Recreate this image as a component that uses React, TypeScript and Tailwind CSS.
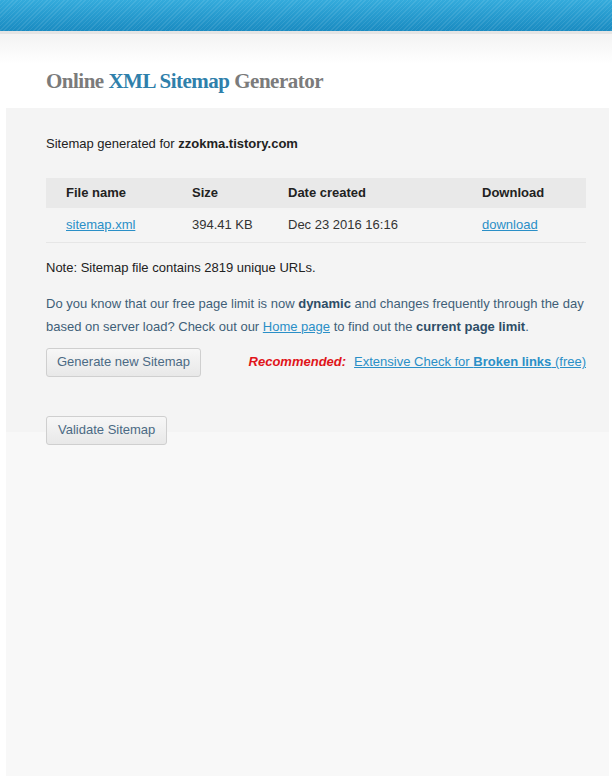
export default function App() {
  return (
    <div className="h-[781px] w-[612px] bg-white font-['Liberation_Sans',Arial,sans-serif] text-[13px]">
      {/* top stripe bar */}
      <div className="h-[31px] bg-[repeating-linear-gradient(135deg,rgba(255,255,255,0.09)_0px,rgba(255,255,255,0.09)_1px,transparent_1px,transparent_3px),linear-gradient(to_bottom,#34abdc,#1a8bc1)]" />
      <div className="h-[3px] bg-[#e4e4e4]" />
      <div className="h-[74px] bg-[linear-gradient(to_bottom,#f3f3f3,#ffffff_40%)] px-[46px] pt-[37px]">
        <h1 className="font-['Liberation_Serif',Georgia,serif] text-[21px] font-bold leading-none tracking-[-0.5px] text-[#7b7b7b]">
          Online <span className="text-[#2f80ab]">XML Sitemap</span> Generator
        </h1>
      </div>

      <div className="ml-[6px] mr-[3px] h-[668px] bg-[linear-gradient(to_bottom,#f4f4f4_324px,#f8f8f8_324px)] pl-[40px] pr-[23px] pt-[26px]">
        <p className="text-[#222]">
          Sitemap generated for <b>zzokma.tistory.com</b>
        </p>

        <table className="mt-[24px] w-full border-collapse text-left">
          <thead>
            <tr className="h-[30px] bg-[#e9e9e9] text-[#222]">
              <th className="w-[146px] pl-[20px] font-bold">File name</th>
              <th className="w-[96px] font-bold">Size</th>
              <th className="w-[194px] font-bold">Date created</th>
              <th className="font-bold">Download</th>
            </tr>
          </thead>
          <tbody>
            <tr className="h-[35px] border-b border-[#e6e6e6] text-[#333]">
              <td className="pl-[20px]">
                <a href="#" className="text-[#2a8fc7] underline">sitemap.xml</a>
              </td>
              <td>394.41 KB</td>
              <td>Dec 23 2016 16:16</td>
              <td>
                <a href="#" className="text-[#2a8fc7] underline">download</a>
              </td>
            </tr>
          </tbody>
        </table>

        <p className="mt-[15px] text-[#222]">Note: Sitemap file contains 2819 unique URLs.</p>

        <p className="mt-[14px] leading-[23px] text-[#3f5f78]">
          Do you know that our free page limit is now <b className="text-[#2e4d66]">dynamic</b> and changes frequently through the day based on server load? Check out our{' '}
          <a href="#" className="text-[#2a8fc7] underline">Home page</a> to find out the{' '}
          <b className="text-[#2e4d66]">current page limit</b>.
        </p>

        <div className="mt-[10px] flex items-center">
          <button className="h-[29px] rounded-[3px] border border-[#cfcfcf] bg-[linear-gradient(to_bottom,#f7f7f7,#e8e8e8)] px-[10px] text-[#4b6a84]">
            Generate new Sitemap
          </button>
          <span className="ml-auto font-bold italic text-[#e0141a]">Recommended:</span>
          <a href="#" className="ml-[8px] text-[#2a8fc7] underline">
            Extensive Check for <b>Broken links</b> (free)
          </a>
        </div>

        <button className="mt-[39px] h-[29px] rounded-[3px] border border-[#cfcfcf] bg-[linear-gradient(to_bottom,#f7f7f7,#e8e8e8)] px-[11px] text-[#4b6a84]">
          Validate Sitemap
        </button>
      </div>
    </div>
  );
}
